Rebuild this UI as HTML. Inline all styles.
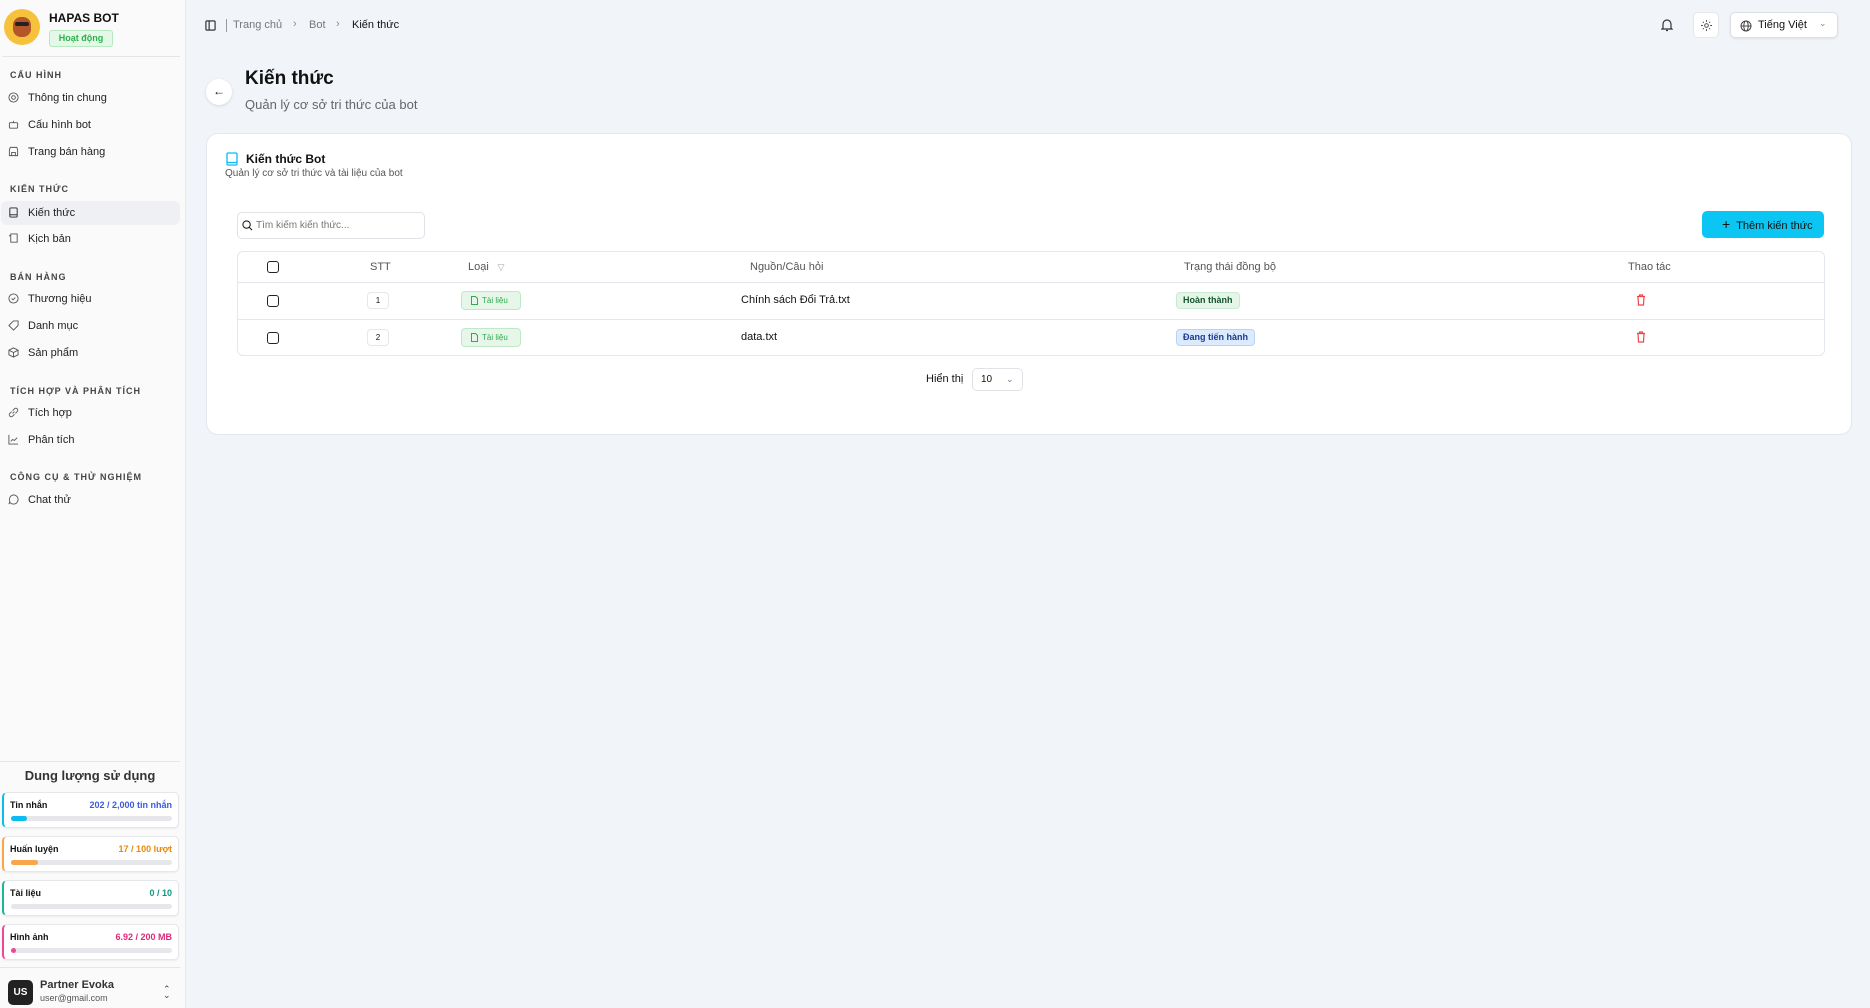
<!DOCTYPE html>
<html><head><meta charset="utf-8"><style>
*{box-sizing:border-box;margin:0;padding:0}
body{width:1870px;height:1008px;overflow:hidden;background:#f1f4f9;font-family:"Liberation Sans",sans-serif;color:#111;position:relative}
.abs{position:absolute}
#sb{position:absolute;left:0;top:0;width:186px;height:1008px;background:#fafafa;border-right:1px solid #e6e8ec}
.sec{position:absolute;left:10px;font-size:9px;letter-spacing:1px;color:#444;font-weight:bold}
.it{position:absolute;left:1px;width:179px;height:24px;font-size:11px;color:#222;padding-left:27px;line-height:24px}
.it svg{position:absolute;left:7px;top:6px}
.it.act{background:#eef0f4;border-radius:6px}
.uc{position:absolute;left:2px;width:177px;height:36px;background:#fff;border:1px solid #e5e7eb;border-radius:5px;box-shadow:0 1px 2px rgba(0,0,0,.06)}
.uc .l{position:absolute;left:6px;top:7px;font-size:9px;font-weight:bold}
.uc .r{position:absolute;right:6px;top:7px;font-size:9px;font-weight:bold}
.uc .bar{position:absolute;left:7px;right:6px;top:23px;height:5px;background:#e5e7eb;border-radius:3px}
.uc .bar i{display:block;height:5px;border-radius:3px}
.card{position:absolute;left:206px;top:133px;width:1646px;height:302px;background:#fff;border:1px solid #e3e7ee;border-radius:12px}
.th{position:absolute;font-size:11px;color:#555;top:9px}
.cb{position:absolute;width:12px;height:12px;border:1.5px solid #222;border-radius:3px}
.num{position:absolute;left:129px;width:22px;height:17px;border:1px solid #e5e7eb;border-radius:4px;font-size:8px;text-align:center;line-height:15px}
.tag{position:absolute;left:223px;width:60px;height:19px;background:#e6f7ea;border:1px solid #bfe8c9;border-radius:4px;color:#2faa4d;font-size:8px;line-height:17px;padding-left:20px;white-space:nowrap}
.tag svg{position:absolute;left:9px;top:4px}
</style></head><body>
<div id="sb">
 <div class="abs" style="left:4px;top:9px;width:36px;height:36px;border-radius:50%;background:#f6c23c"><div class="abs" style="left:9px;top:8px;width:18px;height:20px;background:#b4562a;border-radius:8px"></div><div class="abs" style="left:11px;top:13px;width:14px;height:4px;background:#222;border-radius:2px"></div></div>
 <div class="abs" style="left:49px;top:11px;font-size:12px;font-weight:bold">HAPAS BOT</div>
 <div class="abs" style="left:49px;top:30px;width:64px;height:17px;background:#e3f8e6;border:1px solid #b8e8c0;border-radius:3px;color:#2bb24c;font-size:9px;font-weight:bold;text-align:center;line-height:15px">Hoạt động</div>
 <div class="abs" style="left:2px;top:56px;width:178px;height:1px;background:#e3e5e8"></div>
 <div class="sec" style="top:70px">CẤU HÌNH</div>
 <div class="it" style="top:86px"><svg width="11" height="11" viewBox="0 0 12 12" fill="none" stroke="#555"><circle cx="6" cy="6" r="2"/><circle cx="6" cy="6" r="5"/></svg>Thông tin chung</div>
 <div class="it" style="top:113px"><svg width="11" height="11" viewBox="0 0 12 12" fill="none" stroke="#555"><rect x="1.5" y="4" width="9" height="6" rx="1"/><path d="M6 4V2"/></svg>Cấu hình bot</div>
 <div class="it" style="top:140px"><svg width="11" height="11" viewBox="0 0 12 12" fill="none" stroke="#555"><path d="M1.5 4l1-2.5h7l1 2.5v6.5h-9z M4 10.5V7h4v3.5"/></svg>Trang bán hàng</div>
 <div class="sec" style="top:184px">KIẾN THỨC</div>
 <div class="it act" style="top:201px"><svg width="11" height="11" viewBox="0 0 12 12" fill="none" stroke="#222"><rect x="2" y="1" width="8" height="10" rx="1"/><path d="M2 8.5h8"/></svg>Kiến thức</div>
 <div class="it" style="top:227px"><svg width="11" height="11" viewBox="0 0 12 12" fill="none" stroke="#555"><path d="M3 1h7v9H3zM1 3h2"/></svg>Kịch bản</div>
 <div class="sec" style="top:272px">BÁN HÀNG</div>
 <div class="it" style="top:287px"><svg width="11" height="11" viewBox="0 0 12 12" fill="none" stroke="#555"><circle cx="6" cy="6" r="5"/><path d="M4 6l1.5 1.5L8 5"/></svg>Thương hiệu</div>
 <div class="it" style="top:314px"><svg width="11" height="11" viewBox="0 0 12 12" fill="none" stroke="#555"><path d="M1 6l5-5h5v5l-5 5z"/></svg>Danh mục</div>
 <div class="it" style="top:341px"><svg width="11" height="11" viewBox="0 0 12 12" fill="none" stroke="#555"><path d="M6 1l5 2.5v5L6 11 1 8.5v-5zM1 3.5L6 6l5-2.5M6 6v5"/></svg>Sản phẩm</div>
 <div class="sec" style="top:386px">TÍCH HỢP VÀ PHÂN TÍCH</div>
 <div class="it" style="top:401px"><svg width="11" height="11" viewBox="0 0 12 12" fill="none" stroke="#555"><path d="M5 7l2-2M4 5L2 7a2 2 0 003 3l2-2M8 7l2-2a2 2 0 00-3-3L5 4"/></svg>Tích hợp</div>
 <div class="it" style="top:428px"><svg width="11" height="11" viewBox="0 0 12 12" fill="none" stroke="#555"><path d="M1 1v10h10M3 8l2-2 2 1 3-3"/></svg>Phân tích</div>
 <div class="sec" style="top:472px">CÔNG CỤ &amp; THỬ NGHIỆM</div>
 <div class="it" style="top:488px"><svg width="11" height="11" viewBox="0 0 12 12" fill="none" stroke="#555"><path d="M6 1a5 5 0 11-4 8L1 11l1-3A5 5 0 016 1z"/></svg>Chat thử</div>

 <div class="abs" style="left:0;top:761px;width:180px;height:1px;background:#e3e5e8"></div>
 <div class="abs" style="left:0;top:768px;width:180px;text-align:center;font-size:13px;font-weight:bold;color:#333">Dung lượng sử dụng</div>
 <div class="uc" style="top:792px;border-left:2px solid #0bbcf0"><span class="l">Tin nhắn</span><span class="r" style="color:#3b5bdb">202 / 2,000 tin nhắn</span><div class="bar"><i style="width:10%;background:#0bbcf0"></i></div></div>
 <div class="uc" style="top:836px;border-left:2px solid #f8a64a"><span class="l">Huấn luyện</span><span class="r" style="color:#e8890c">17 / 100 lượt</span><div class="bar"><i style="width:17%;background:#f8a64a"></i></div></div>
 <div class="uc" style="top:880px;border-left:2px solid #1bb39a"><span class="l">Tài liệu</span><span class="r" style="color:#14937f">0 / 10</span><div class="bar"></div></div>
 <div class="uc" style="top:924px;border-left:2px solid #ec4899"><span class="l">Hình ảnh</span><span class="r" style="color:#e0287a">6.92 / 200 MB</span><div class="bar"><i style="width:5px;background:#ec4899"></i></div></div>
 <div class="abs" style="left:0;top:967px;width:180px;height:1px;background:#e3e5e8"></div>
 <div class="abs" style="left:8px;top:980px;width:25px;height:25px;background:#222;border-radius:5px;color:#fff;font-size:10px;font-weight:bold;text-align:center;line-height:25px">US</div>
 <div class="abs" style="left:40px;top:979px;font-size:11px;font-weight:bold;color:#333">Partner Evoka</div>
 <div class="abs" style="left:40px;top:993px;font-size:9px;color:#555">user@gmail.com</div>
 <div class="abs" style="left:163px;top:986px;font-size:9px;color:#444;line-height:6px">⌃<br>⌄</div>
</div>

<svg class="abs" style="left:205px;top:20px" width="11" height="11" viewBox="0 0 12 12" fill="none" stroke="#222" stroke-width="1.2"><rect x="1" y="1" width="10" height="10" rx="1"/><path d="M4.5 1v10"/></svg>
<div class="abs" style="left:226px;top:19px;width:1px;height:13px;background:#999"></div>
<div class="abs" style="left:233px;top:19px;font-size:11px;color:#777">Trang chủ</div>
<div class="abs" style="left:293px;top:18px;font-size:11px;color:#888">›</div>
<div class="abs" style="left:309px;top:19px;font-size:11px;color:#777">Bot</div>
<div class="abs" style="left:336px;top:18px;font-size:11px;color:#888">›</div>
<div class="abs" style="left:352px;top:19px;font-size:11px;color:#111">Kiến thức</div>

<svg class="abs" style="left:1661px;top:18px" width="12" height="14" viewBox="0 0 12 14" fill="none" stroke="#333" stroke-width="1.2"><path d="M2 10V6a4 4 0 018 0v4l1 1H1zM5 12.5h2"/></svg>
<div class="abs" style="left:1693px;top:12px;width:26px;height:26px;background:#fff;border:1px solid #e5e7eb;border-radius:5px"><svg class="abs" style="left:7px;top:7px" width="11" height="11" viewBox="0 0 12 12" fill="none" stroke="#444"><circle cx="6" cy="6" r="2"/><path d="M6 0v2M6 10v2M0 6h2M10 6h2M2 2l1 1M9 9l1 1M2 10l1-1M9 3l1-1"/></svg></div>
<div class="abs" style="left:1730px;top:12px;width:108px;height:26px;background:#fff;border:1px solid #dcdfe4;border-radius:5px;box-shadow:0 1px 2px rgba(0,0,0,.08)"><svg class="abs" style="left:9px;top:7px" width="12" height="12" viewBox="0 0 12 12" fill="none" stroke="#444"><circle cx="6" cy="6" r="5"/><ellipse cx="6" cy="6" rx="2.2" ry="5"/><path d="M1 6h10"/></svg><span class="abs" style="left:27px;top:6px;font-size:11px">Tiếng Việt</span><span class="abs" style="left:88px;top:5px;font-size:9px;color:#888">⌄</span></div>

<div class="abs" style="left:206px;top:79px;width:26px;height:26px;border-radius:50%;background:#fff;box-shadow:0 1px 3px rgba(0,0,0,.12);text-align:center;line-height:25px;font-size:12px">←</div>
<div class="abs" style="left:245px;top:68px;font-size:19px;font-weight:bold">Kiến thức</div>
<div class="abs" style="left:245px;top:97px;font-size:13px;color:#666">Quản lý cơ sở tri thức của bot</div>

<div class="card">
 <svg class="abs" style="left:19px;top:18px" width="12" height="14" viewBox="0 0 12 14" fill="none" stroke="#0bbcf0" stroke-width="1.3"><rect x="1" y="1" width="10" height="12" rx="1"/><path d="M1 10.5h10"/></svg>
 <div class="abs" style="left:39px;top:18px;font-size:12px;font-weight:bold">Kiến thức Bot</div>
 <div class="abs" style="left:18px;top:34px;font-size:10px;color:#555">Quản lý cơ sở tri thức và tài liệu của bot</div>
 <div class="abs" style="left:30px;top:78px;width:188px;height:27px;border:1px solid #dfe3e8;border-radius:5px"><svg class="abs" style="left:4px;top:7px" width="11" height="11" viewBox="0 0 12 12" fill="none" stroke="#222" stroke-width="1.2"><circle cx="5" cy="5" r="4"/><path d="M8 8l3 3"/></svg><span class="abs" style="left:18px;top:7px;font-size:10px;color:#777">Tìm kiếm kiến thức...</span></div>
 <div class="abs" style="left:1495px;top:77px;width:122px;height:27px;background:#0bc5f2;border-radius:5px;font-size:11px;color:#111;line-height:27px;padding-left:20px"><span style="font-size:14px;margin-right:6px">+</span>Thêm kiến thức</div>
 <div class="abs" style="left:30px;top:117px;width:1588px;height:105px;border:1px solid #e3e7ee;border-radius:6px">
  <div class="abs" style="left:0;top:30px;width:100%;height:1px;background:#e3e7ee"></div>
  <div class="abs" style="left:0;top:67px;width:100%;height:1px;background:#e3e7ee"></div>
  <div class="cb" style="left:29px;top:9px"></div>
  <div class="th" style="left:132px">STT</div>
  <div class="th" style="left:230px">Loại</div>
  <div class="abs" style="left:253px;top:5px;width:20px;height:20px;border-radius:4px;color:#aaa;font-size:9px;text-align:center;line-height:20px">▽</div>
  <div class="th" style="left:512px">Nguồn/Câu hỏi</div>
  <div class="th" style="left:946px">Trạng thái đồng bộ</div>
  <div class="th" style="left:1390px">Thao tác</div>
  <div class="cb" style="left:29px;top:43px"></div>
  <div class="num" style="top:40px">1</div>
  <div class="tag" style="top:39px"><svg width="7" height="9" viewBox="0 0 7 9" fill="none" stroke="#2faa4d"><path d="M.5.5h4l2 2v6h-6z"/></svg>Tài liệu</div>
  <div class="abs" style="left:503px;top:42px;font-size:11px">Chính sách Đổi Trả.txt</div>
  <div class="abs" style="left:938px;top:40px;height:17px;padding:0 6px;background:#e5f6e9;border:1px solid #c8ead0;border-radius:4px;font-size:9px;font-weight:bold;color:#14532d;line-height:15px">Hoàn thành</div>
  <svg class="abs" style="left:1398px;top:42px" width="10" height="12" viewBox="0 0 10 12" fill="none" stroke="#ef4444" stroke-width="1.2"><path d="M1 2.5h8M3.5 2.5V1h3v1.5M2 2.5l.5 8.5h5l.5-8.5"/></svg>
  <div class="cb" style="left:29px;top:80px"></div>
  <div class="num" style="top:77px">2</div>
  <div class="tag" style="top:76px"><svg width="7" height="9" viewBox="0 0 7 9" fill="none" stroke="#2faa4d"><path d="M.5.5h4l2 2v6h-6z"/></svg>Tài liệu</div>
  <div class="abs" style="left:503px;top:79px;font-size:11px">data.txt</div>
  <div class="abs" style="left:938px;top:77px;height:17px;padding:0 6px;background:#dbeafe;border:1px solid #b9d3f7;border-radius:4px;font-size:9px;font-weight:bold;color:#1e3a8a;line-height:15px">Đang tiến hành</div>
  <svg class="abs" style="left:1398px;top:79px" width="10" height="12" viewBox="0 0 10 12" fill="none" stroke="#ef4444" stroke-width="1.2"><path d="M1 2.5h8M3.5 2.5V1h3v1.5M2 2.5l.5 8.5h5l.5-8.5"/></svg>
 </div>
 <div class="abs" style="left:719px;top:239px;font-size:11px">Hiển thị</div>
 <div class="abs" style="left:765px;top:234px;width:51px;height:23px;border:1px solid #dfe3e8;border-radius:5px;font-size:10px;line-height:21px;padding-left:8px">10<span class="abs" style="left:33px;top:0;color:#777;font-size:9px">⌄</span></div>
</div>
</body></html>
